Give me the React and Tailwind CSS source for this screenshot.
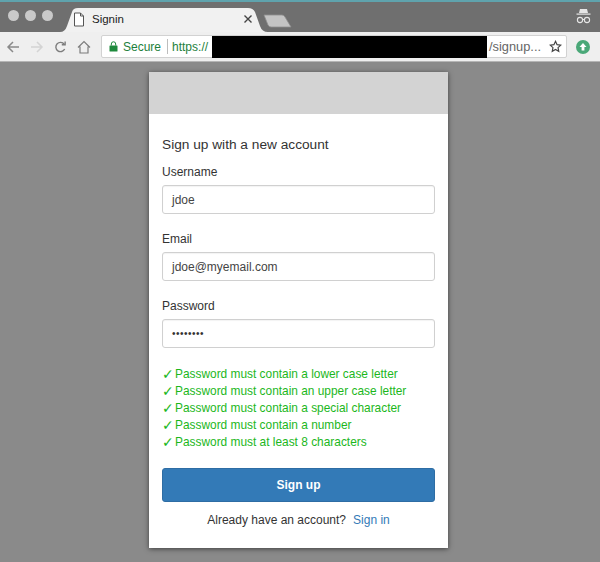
const rules = [
  'Password must contain a lower case letter',
  'Password must contain an upper case letter',
  'Password must contain a special character',
  'Password must contain a number',
  'Password must at least 8 characters',
];

const Field = ({ label, value, className = '' }) => (
  <div className={className}>
    <div className="text-[12px] leading-[16px] text-[#333] mb-[5px]">{label}</div>
    <div className="h-[29px] flex items-center px-[9px] bg-white border border-[#d0d0d0] rounded-[3px] text-[12px] text-[#444] shadow-[inset_0_1px_1px_rgba(0,0,0,0.05)]">
      {value}
    </div>
  </div>
);

const TabBar = () => (
  <div className="relative h-[32px] bg-[#6f6f6f] border-t-2 border-[#5fa3ad] flex items-start">
    <div className="flex gap-[6px] ml-[8px] mt-[8px]">
      <span className="w-[11px] h-[11px] rounded-full bg-[#c9c9c9]" />
      <span className="w-[11px] h-[11px] rounded-full bg-[#c9c9c9]" />
      <span className="w-[11px] h-[11px] rounded-full bg-[#c9c9c9]" />
    </div>
    {/* active tab */}
    <svg className="absolute left-[60px] top-[6px]" width="208" height="24" viewBox="0 0 208 24">
      <path d="M0 24 Q5 24 7 18 L12 4 Q13 0 18 0 L188 0 Q193 0 195 4 L200 18 Q202 24 208 24 Z" fill="#f1f1f1" />
    </svg>
    <svg className="absolute left-[73px] top-[10px]" width="12" height="15" viewBox="0 0 12 15" fill="none" stroke="#555" strokeWidth="1">
      <path d="M1.5 1h6l3 3v10h-9z" fill="#fff" />
      <path d="M7.5 1v3h3" />
    </svg>
    <span className="absolute left-[92px] top-[9px] text-[11.5px] leading-[16px] text-[#222]">Signin</span>
    <svg className="absolute left-[244px] top-[13px]" width="8" height="8" viewBox="0 0 8 8" stroke="#444" strokeWidth="1.4">
      <path d="M0.5 0.5l7 7M7.5 0.5l-7 7" />
    </svg>
    {/* new tab button */}
    <svg className="absolute left-[263px] top-[12px]" width="30" height="14" viewBox="0 0 30 14">
      <path d="M1 1 L19 1 Q21 1 22 3 L28 13 L8 13 Q6 13 5 11 Z" fill="#c4c4c4" stroke="#8f8f8f" strokeWidth="0.8" />
    </svg>
    {/* incognito */}
    <svg className="absolute left-[576px] top-[6px]" width="15" height="16" viewBox="0 0 15 16" fill="#e6e6e6">
      <path d="M4 1h7l1 4H3z" />
      <rect x="0.5" y="5.5" width="14" height="1.2" />
      <circle cx="4" cy="12" r="2.6" fill="none" stroke="#e6e6e6" strokeWidth="1.1" />
      <circle cx="11" cy="12" r="2.6" fill="none" stroke="#e6e6e6" strokeWidth="1.1" />
      <path d="M6.5 11.5h2" stroke="#e6e6e6" />
    </svg>
  </div>
);

const Toolbar = () => (
  <div className="h-[30px] bg-[#efefef] border-b border-[#b5b5b5] flex items-center">
    <div className="flex items-center ml-[6px] gap-[10px]">
      <svg width="14" height="14" viewBox="0 0 14 14" fill="none" stroke="#8a8a8a" strokeWidth="1.5">
        <path d="M13 7H2M7 2L2 7l5 5" />
      </svg>
      <svg width="14" height="14" viewBox="0 0 14 14" fill="none" stroke="#d4d4d4" strokeWidth="1.5">
        <path d="M1 7h11M7 2l5 5-5 5" />
      </svg>
      <svg width="13" height="14" viewBox="0 0 14 14" fill="none" stroke="#7d7d7d" strokeWidth="1.5">
        <path d="M11.5 9.2A5 5 0 1 1 11 4" />
        <path d="M12 1v3.6H8.4" />
      </svg>
      <svg width="14" height="14" viewBox="0 0 14 14" fill="none" stroke="#7d7d7d" strokeWidth="1.2">
        <path d="M1 7.5L7 1.5l6 6M3 6.5V13h8V6.5" />
      </svg>
    </div>
    <div className="ml-[10px] w-[466px] h-[23px] bg-white rounded-[2px] border border-[#d2d2d2] flex items-center text-[12px] text-[#666]">
      <svg className="ml-[7px]" width="9" height="11" viewBox="0 0 9 11" fill="#1e8a3c">
        <rect x="0.5" y="4.5" width="8" height="6" rx="0.5" />
        <path d="M2.3 4.5V3a2.2 2.2 0 0 1 4.4 0v1.5" fill="none" stroke="#1e8a3c" strokeWidth="1" />
      </svg>
      <span className="ml-[5px] text-[#1e7f3c]">Secure</span>
      <span className="ml-[6px] w-px h-[15px] bg-[#bdbdbd]" />
      <span className="ml-[4px] text-[#1e7f3c]">https://</span>
      <span className="ml-[4px] w-[275px] h-[22px] bg-black" />
      <span className="ml-[2px] text-[12.8px]">/signup...</span>
      <svg className="ml-[8px]" width="13" height="13" viewBox="0 0 24 24" fill="none" stroke="#444" strokeWidth="2.2">
        <path d="M12 2.5l2.9 6.2 6.8.8-5 4.6 1.3 6.7-6-3.4-6 3.4 1.3-6.7-5-4.6 6.8-.8z" />
      </svg>
    </div>
    <svg className="ml-[9px]" width="14" height="14" viewBox="0 0 14 14">
      <circle cx="7" cy="7" r="7" fill="#4aa878" />
      <path d="M7 3l3.5 4H8.4v3.5H5.6V7H3.5z" fill="#fff" />
    </svg>
  </div>
);

export default function App() {
  return (
    <div className="w-[600px] h-[562px] overflow-hidden bg-[#8a8a8a] font-['Liberation_Sans',Arial,sans-serif]">
      <TabBar />
      <Toolbar />
      <div className="mt-[10px] ml-[149px] w-[299px] h-[476px] bg-white shadow-[0_1px_5px_rgba(0,0,0,0.55)]">
        <div className="h-[42px] bg-[#d3d3d3]" />
        <div className="px-[13px] pt-[22px]">
          <div className="text-[13.7px] leading-[17px] text-[#333] mb-[11px]">Sign up with a new account</div>
          <Field label="Username" value="jdoe" />
          <Field label="Email" value="jdoe@myemail.com" className="mt-[17px]" />
          <Field label="Password" value={<span className="tracking-[0.5px] text-[10px] text-[#333]">••••••••</span>} className="mt-[17px]" />
          <div className="mt-[18px] text-[11.9px] leading-[17px] text-[#1cb71c]">
            {rules.map((rule) => (
              <div key={rule} className="flex items-center">
                <span className="w-[13px] text-[14px] leading-[17px] font-bold font-['DejaVu_Sans',sans-serif]">✓</span>
                <span>{rule}</span>
              </div>
            ))}
          </div>
          <button className="block mt-[17px] w-[273px] h-[34px] bg-[#337ab7] border border-[#2e6da4] rounded-[3px] text-white text-[12px] font-bold">
            Sign up
          </button>
          <div className="mt-[10px] text-center text-[12px] leading-[16px] text-[#333]">
            Already have an account?
            <a className="ml-[7px] text-[#337ab7]">Sign in</a>
          </div>
        </div>
      </div>
    </div>
  );
}
